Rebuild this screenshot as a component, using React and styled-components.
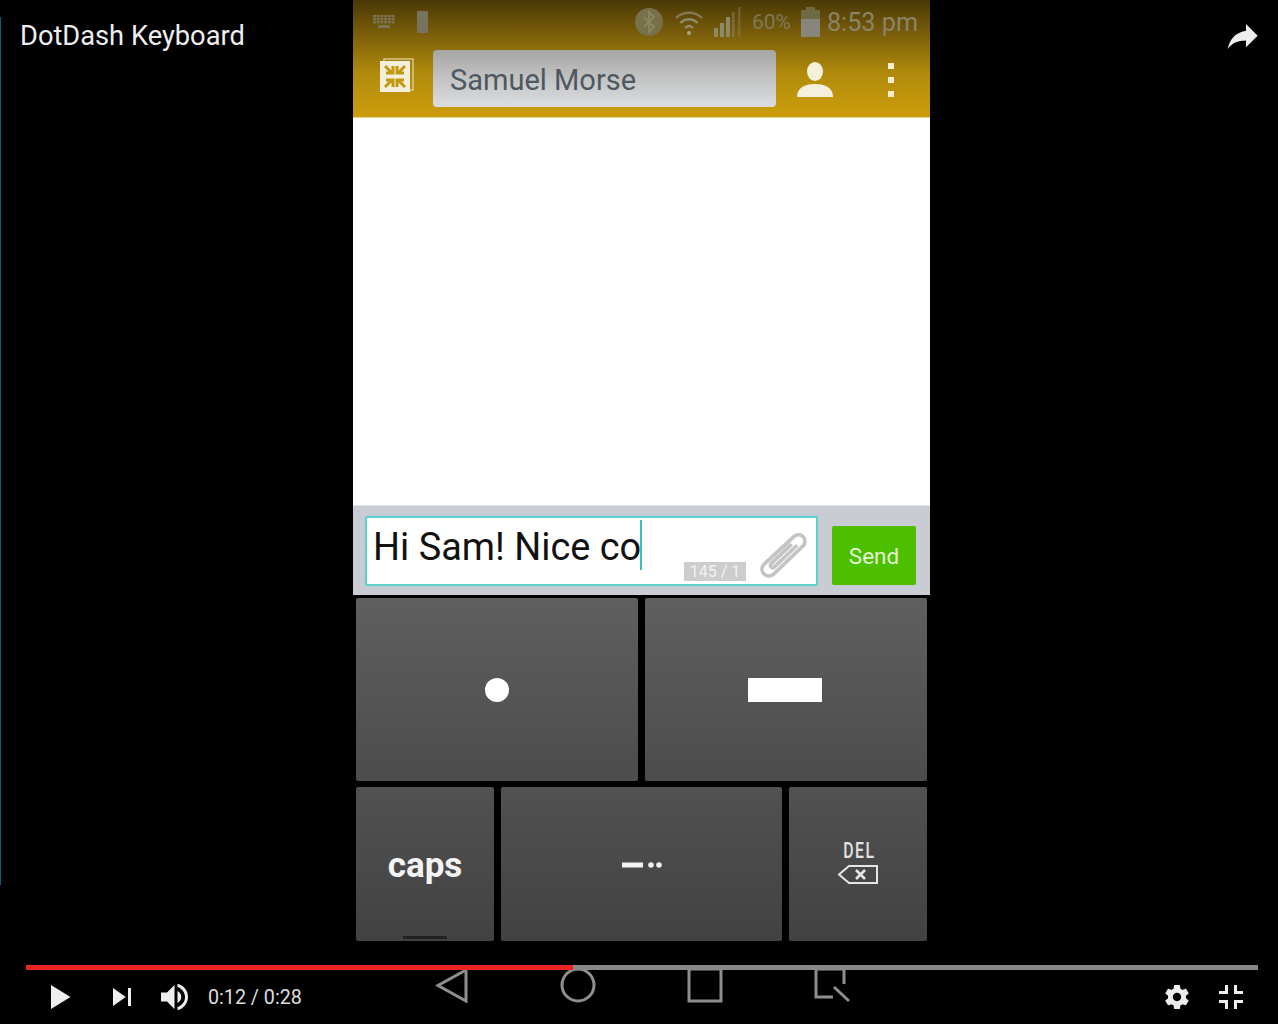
import React from "react";
import styled, { createGlobalStyle } from "styled-components";

const Global = createGlobalStyle`
  html, body { margin: 0; padding: 0; background: #000; }
  body { font-family: Roboto, "Liberation Sans", sans-serif; }
`;

const Stage = styled.div`
  position: relative;
  width: 1278px;
  height: 1024px;
  overflow: hidden;
  background: #000;
`;
const EdgeLine = styled.div`
  position: absolute;
  left: 0;
  top: 17px;
  width: 1px;
  height: 868px;
  background: #0d5f82;
`;
const Phone = styled.div`
  margin-left: 353px;
  width: 577px;
  display: flex;
  flex-direction: column;
`;
const TopBar = styled.div`
  height: 118px;
  display: flex;
  flex-direction: column;
  background: linear-gradient(180deg, #4a3906 0%, #7c5f0a 30%, #b08a0c 62%, #cd9e0c 100%);
  border-bottom: 1px solid #e8d48a;
  box-sizing: border-box;
`;
const StatusBar = styled.div`
  height: 44px;
  display: flex;
  align-items: center;
  padding: 0 12px 0 20px;
  color: #8a8264;
`;
const Spacer = styled.div`
  flex: 1;
`;
const Percent = styled.span`
  font-size: 21px;
  margin: 0 10px 0 8px;
  color: #7f7a58;
`;
const Clock = styled.span`
  font-size: 25.2px;
  margin-left: 7px;
  color: #8a8468;
`;
const SimBlock = styled.div`
  width: 11px;
  height: 22px;
  margin-left: 22px;
  border-radius: 1px;
  background: #77735f;
`;
const Header = styled.div`
  flex: 1;
  display: flex;
  align-items: flex-start;
  padding: 6px 0 0 27px;
`;
const NameField = styled.div`
  width: 343px;
  height: 57px;
  margin-left: 19px;
  box-sizing: border-box;
  padding: 2px 0 0 17px;
  display: flex;
  align-items: center;
  font-size: 29px;
  color: #4e5860;
  border-radius: 4px;
  background: linear-gradient(180deg, #a6a6a4 0%, #c2c3c3 50%, #dcdde0 100%);
`;
const HeaderIcon = styled.div`
  display: flex;
  margin: ${(p) => p.$margin};
`;
const Dots = styled.div`
  display: flex;
  flex-direction: column;
  gap: 8px;
  margin: 13px 0 0 55px;
`;
const Dot = styled.div`
  width: 6px;
  height: 6px;
  background: #f3eccf;
`;
const Thread = styled.div`
  height: 387px;
  background: #fff;
`;
const Composer = styled.div`
  height: 90px;
  box-sizing: border-box;
  border-top: 1px solid #e0e2e5;
  background: #c9ccd2;
  display: flex;
  align-items: flex-start;
  padding: 10px 14px 0 12px;
`;
const InputBox = styled.div`
  position: relative;
  width: 453px;
  height: 70px;
  box-sizing: border-box;
  border: 2px solid #5fd0d0;
  box-shadow: 0 0 1px #5fd0d0;
  border-radius: 3px;
  background: #fff;
  padding: 4px 0 0 6px;
  display: flex;
  align-items: flex-start;
  font-size: 37.9px;
  line-height: 50px;
  color: #111;
`;
const Caret = styled.span`
  display: block;
  width: 2px;
  height: 50px;
  margin: -2px 0 0 -1px;
  background: #3cc0c0;
`;
const Counter = styled.div`
  position: absolute;
  left: 317px;
  top: 44px;
  width: 62px;
  height: 19px;
  background: #cdcdcd;
  color: #f2f2f2;
  font-size: 16px;
  line-height: 19px;
  text-align: center;
`;
const ClipWrap = styled.div`
  position: absolute;
  left: 388px;
  top: 12px;
  display: flex;
`;
const SendButton = styled.div`
  width: 84px;
  height: 59px;
  margin: 10px 0 0 14px;
  box-sizing: border-box;
  border-radius: 2px;
  background: #4bbf00;
  color: #e4f7d4;
  font-size: 22.5px;
  display: flex;
  align-items: center;
  justify-content: center;
`;
const Keyboard = styled.div`
  padding: 3px 3px 0;
  display: flex;
  flex-direction: column;
  gap: 6px;
`;
const KeyRow = styled.div`
  display: grid;
  grid-template-columns: ${(p) => p.$cols};
  gap: 7px;
  height: ${(p) => p.$h}px;
`;
const Key = styled.div`
  position: relative;
  border-radius: 2px;
  display: flex;
  align-items: center;
  justify-content: center;
  background: linear-gradient(180deg, ${(p) => p.$from} 0%, ${(p) => p.$to} 100%);
`;
const DotGlyph = styled.div`
  width: 24px;
  height: 24px;
  border-radius: 50%;
  background: #fff;
`;
const DashGlyph = styled.div`
  width: 74px;
  height: 24px;
  background: #fff;
  margin-left: -2px;
`;
const CapsLabel = styled.span`
  font-size: 35px;
  font-weight: 700;
  color: #f4f4f4;
  margin-top: 2px;
`;
const CapsMark = styled.div`
  position: absolute;
  left: 47px;
  bottom: 2px;
  width: 44px;
  height: 3px;
  background: #222;
`;
const DelStack = styled.div`
  display: flex;
  flex-direction: column;
  align-items: center;
  gap: 3px;
  margin: 0 0 2px 1px;
  color: #e2e2e2;
`;
const DelLabel = styled.span`
  font-size: 22px;
  font-weight: 500;
  line-height: 20px;
  letter-spacing: 2px;
  transform: scaleX(0.72);
  margin-left: 2px;
`;
const NavRow = styled.div`
  display: flex;
  align-items: flex-start;
  gap: 91px;
  margin-top: 26px;
  padding-left: 80px;
`;
const NavIcon = styled.svg`
  display: block;
  width: 36px;
  height: 36px;
  fill: none;
  stroke: #8f8f8f;
  stroke-width: 3;
`;
const Title = styled.div`
  position: absolute;
  left: 20px;
  top: 19px;
  font-size: 27.25px;
  line-height: 35px;
  color: #eee;
`;
const ShareButton = styled.div`
  position: absolute;
  left: 1211px;
  top: 9px;
  display: flex;
`;
const Progress = styled.div`
  position: absolute;
  left: 26px;
  top: 965px;
  width: 1232px;
  height: 5px;
  background: #888;
`;
const Played = styled.div`
  height: 100%;
  background: #ee2323;
`;
const Controls = styled.div`
  position: absolute;
  left: 0;
  right: 20px;
  top: 970px;
  height: 54px;
  display: flex;
  align-items: center;
  padding-left: 33px;
`;
const CtrlIcon = styled.svg`
  display: block;
  flex: none;
  width: 54px;
  height: 54px;
  fill: #eee;
  margin-right: ${(p) => p.$mr || 0}px;
`;
const Time = styled.span`
  font-size: 19.7px;
  color: #ddd;
  margin-left: 5px;
  margin-top: 1px;
`;

const KeyboardGlyph = () => (
  <svg width="22" height="14" viewBox="0 0 22 14" fill="#7a7450">
    {[0, 1, 2].map((r) =>
      [0, 1, 2, 3, 4, 5].map((c) => (
        <rect key={r + "-" + c} x={c * 3.7} y={r * 3} width="3" height="2.4" />
      ))
    )}
    <rect x="5" y="10" width="12" height="3" />
  </svg>
);
const Bluetooth = () => (
  <svg width="28" height="28" viewBox="0 0 28 28" style={{ marginRight: 11, marginLeft: 1 }}>
    <circle cx="14" cy="14" r="14" fill="#77704a" />
    <path d="M9 9l10 10-5 5V4l5 5-10 10" fill="none" stroke="#8d8864" strokeWidth="1.6" />
  </svg>
);
const Wifi = () => (
  <svg width="30" height="28" viewBox="0 0 30 28" fill="none" stroke="#8f8a6c" strokeWidth="2.4" style={{ marginRight: 10 }}>
    <path d="M2 10c7-7 19-7 26 0" opacity=".75" />
    <path d="M6.500 15c5-5 12-5 17 0" />
    <path d="M11 20c2.500-2.500 5.500-2.500 8 0" />
    <circle cx="15" cy="25" r="2" fill="#a9a48a" stroke="none" />
  </svg>
);
const Signal = () => (
  <svg width="30" height="30" viewBox="0 0 30 30" fill="#8c8868">
    <rect x="0" y="21" width="4" height="9" />
    <rect x="6" y="16" width="4" height="14" />
    <rect x="12" y="10" width="4" height="20" />
    <rect x="18" y="5" width="2.500" height="25" opacity=".5" />
    <rect x="24" y="0" width="2.500" height="30" opacity=".4" />
  </svg>
);
const Battery = () => (
  <svg width="19" height="30" viewBox="0 0 19 30">
    <rect x="5" y="0" width="9" height="3" fill="#6f6a42" />
    <rect x="0" y="3" width="19" height="27" fill="#6f6a42" />
    <rect x="0" y="12" width="19" height="18" fill="#88867a" />
  </svg>
);
const Shrink = () => (
  <svg width="34" height="34" viewBox="0 0 34 34">
    <rect x="4" y="1" width="29" height="31" fill="none" stroke="#e4d9a8" strokeWidth="1.200" />
    <rect x="0" y="3" width="30" height="31" fill="#f3efdc" />
    <g stroke="#c2980f" strokeWidth="3" fill="none">
      <path d="M5 8l7 7M6 15h7V8" />
      <path d="M25 8l-7 7M24 15h-7V8" />
      <path d="M5 29l7-7M6 22h7v7" />
      <path d="M25 29l-7-7M24 22h-7v7" />
    </g>
  </svg>
);
const Person = () => (
  <svg width="36" height="35" viewBox="0 0 36 35" fill="#f5f0dc">
    <ellipse cx="18" cy="9.500" rx="8" ry="9.500" />
    <path d="M0 35c0-9 7-13 18-13s18 4 18 13z" />
  </svg>
);
const Clip = () => (
  <svg width="54" height="52" viewBox="0 0 50 48" fill="none" stroke="#c4c4c4" strokeWidth="3.400" strokeLinecap="round">
    <path d="M36 6L8 32c-5 6 3 14 9 9L45 14c4-6-3-13-9-8M33 14L15 31c-2 3 1 5 3 3L38 15" />
  </svg>
);
const MorseGlyph = () => (
  <svg width="42" height="8" viewBox="0 0 42 8" fill="#f2f2f2" style={{ margin: "2px 0 0 2px" }}>
    <rect x="0" y="1.500" width="21" height="5" />
    <circle cx="29" cy="4" r="2.800" />
    <circle cx="37" cy="4" r="2.800" />
  </svg>
);
const DelIcon = () => (
  <svg width="42" height="21" viewBox="0 0 42 21" fill="none" stroke="#e6e6e6" strokeWidth="2">
    <path d="M12 2h28v17H12L2 10.500z" />
    <path d="M19 6l9 9M28 6l-9 9" strokeWidth="2.600" />
  </svg>
);

export default function App() {
  return (
    <Stage>
      <Global />
      <EdgeLine />
      <Phone>
        <TopBar>
          <StatusBar>
            <KeyboardGlyph />
            <SimBlock />
            <Spacer />
            <Bluetooth />
            <Wifi />
            <Signal />
            <Percent>60%</Percent>
            <Battery />
            <Clock>8:53 pm</Clock>
          </StatusBar>
          <Header>
            <HeaderIcon $margin="8px 0 0 0">
              <Shrink />
            </HeaderIcon>
            <NameField>Samuel Morse</NameField>
            <HeaderIcon $margin="12px 0 0 21px">
              <Person />
            </HeaderIcon>
            <Dots>
              <Dot />
              <Dot />
              <Dot />
            </Dots>
          </Header>
        </TopBar>
        <Thread />
        <Composer>
          <InputBox>
            Hi Sam! Nice co
            <Caret />
            <Counter>145 / 1</Counter>
            <ClipWrap>
              <Clip />
            </ClipWrap>
          </InputBox>
          <SendButton>Send</SendButton>
        </Composer>
        <Keyboard>
          <KeyRow $cols="282px 282px" $h={183}>
            <Key $from="#5f5f5f" $to="#4c4c4c">
              <DotGlyph />
            </Key>
            <Key $from="#5f5f5f" $to="#4c4c4c">
              <DashGlyph />
            </Key>
          </KeyRow>
          <KeyRow $cols="138px 281px 138px" $h={154}>
            <Key $from="#515151" $to="#424242">
              <CapsLabel>caps</CapsLabel>
              <CapsMark />
            </Key>
            <Key $from="#515151" $to="#424242">
              <MorseGlyph />
            </Key>
            <Key $from="#515151" $to="#424242">
              <DelStack>
                <DelLabel>DEL</DelLabel>
                <DelIcon />
              </DelStack>
            </Key>
          </KeyRow>
        </Keyboard>
        <NavRow>
          <NavIcon viewBox="0 0 36 36">
            <path d="M33 3v31L5 18.500z" />
          </NavIcon>
          <NavIcon viewBox="0 0 36 36">
            <circle cx="18" cy="18" r="16" />
          </NavIcon>
          <NavIcon viewBox="0 0 36 36">
            <rect x="2" y="2" width="32" height="32" />
          </NavIcon>
          <NavIcon viewBox="0 0 36 36">
            <path d="M30 17V2H2v28h17M20 20l15 14" />
          </NavIcon>
        </NavRow>
      </Phone>
      <Title>DotDash Keyboard</Title>
      <ShareButton>
        <svg width="60" height="60" viewBox="0 0 36 36" fill="#eee">
          <path d="M21 13V9l7 7-7 7v-4.100c-5 0-8.500 1.600-11 5.100 1-5 4-10 11-11z" />
        </svg>
      </ShareButton>
      <Progress>
        <Played style={{ width: `${(547 / 1232) * 100}%` }} />
      </Progress>
      <Controls>
        <CtrlIcon viewBox="0 0 36 36" $mr={8}>
          <path d="M12 26l6.500-4v-8L12 10zM18.500 22L25 18l-6.500-4z" />
        </CtrlIcon>
        <CtrlIcon viewBox="0 0 36 36">
          <path d="M12 24l8.500-6L12 12v12zM22 12v12h2V12h-2z" />
        </CtrlIcon>
        <CtrlIcon viewBox="0 0 36 36">
          <path d="M8 21h4l5 5V10l-5 5H8v6zM19 14v8c1.480-.68 2.500-2.230 2.500-4 0-1.740-1.020-3.260-2.500-4zM19 11.290c2.890.86 5 3.540 5 6.710s-2.110 5.850-5 6.710v2.060c4.010-.91 7-4.490 7-8.770s-2.990-7.860-7-8.770v2.060z" />
        </CtrlIcon>
        <Time>0:12 / 0:28</Time>
        <Spacer />
        <CtrlIcon viewBox="0 0 36 36">
          <path d="m23.940 18.780c.03-.25.05-.51.05-.78 0-.27-.02-.52-.05-.78l1.680-1.320c.15-.12.19-.33.09-.51l-1.600-2.770c-.09-.17-.31-.24-.48-.17l-1.990.8c-.41-.32-.86-.58-1.350-.78l-.30-2.120c-.02-.19-.19-.33-.39-.33h-3.200c-.2 0-.36.14-.39.33l-.30 2.120c-.48.2-.93.47-1.350.78l-1.990-.8c-.18-.07-.39 0-.48.17l-1.600 2.770c-.10.18-.06.39.09.51l1.680 1.320c-.03.25-.05.52-.05.78 0 .26.02.52.05.78l-1.680 1.320c-.15.12-.19.33-.09.51l1.600 2.770c.09.17.31.24.48.17l1.990-.8c.41.32.86.58 1.350.78l.30 2.120c.02.19.19.33.39.33h3.200c.2 0 .36-.14.39-.33l.30-2.120c.48-.2.93-.47 1.350-.78l1.990.8c.18.07.39 0 .48-.17l1.600-2.770c.09-.17.05-.39-.09-.51l-1.680-1.320zm-5.940 2.010c-1.540 0-2.800-1.250-2.800-2.800 0-1.540 1.250-2.800 2.800-2.800 1.540 0 2.800 1.250 2.800 2.800 0 1.540-1.250 2.800-2.800 2.800z" />
        </CtrlIcon>
        <CtrlIcon viewBox="0 0 36 36">
          <path d="M14 14h-4v2h6v-6h-2v4zM22 14v-4h-2v6h6v-2h-4zM20 26h2v-4h4v-2h-6v6zM10 22h4v4h2v-6h-6v2z" />
        </CtrlIcon>
      </Controls>
    </Stage>
  );
}
